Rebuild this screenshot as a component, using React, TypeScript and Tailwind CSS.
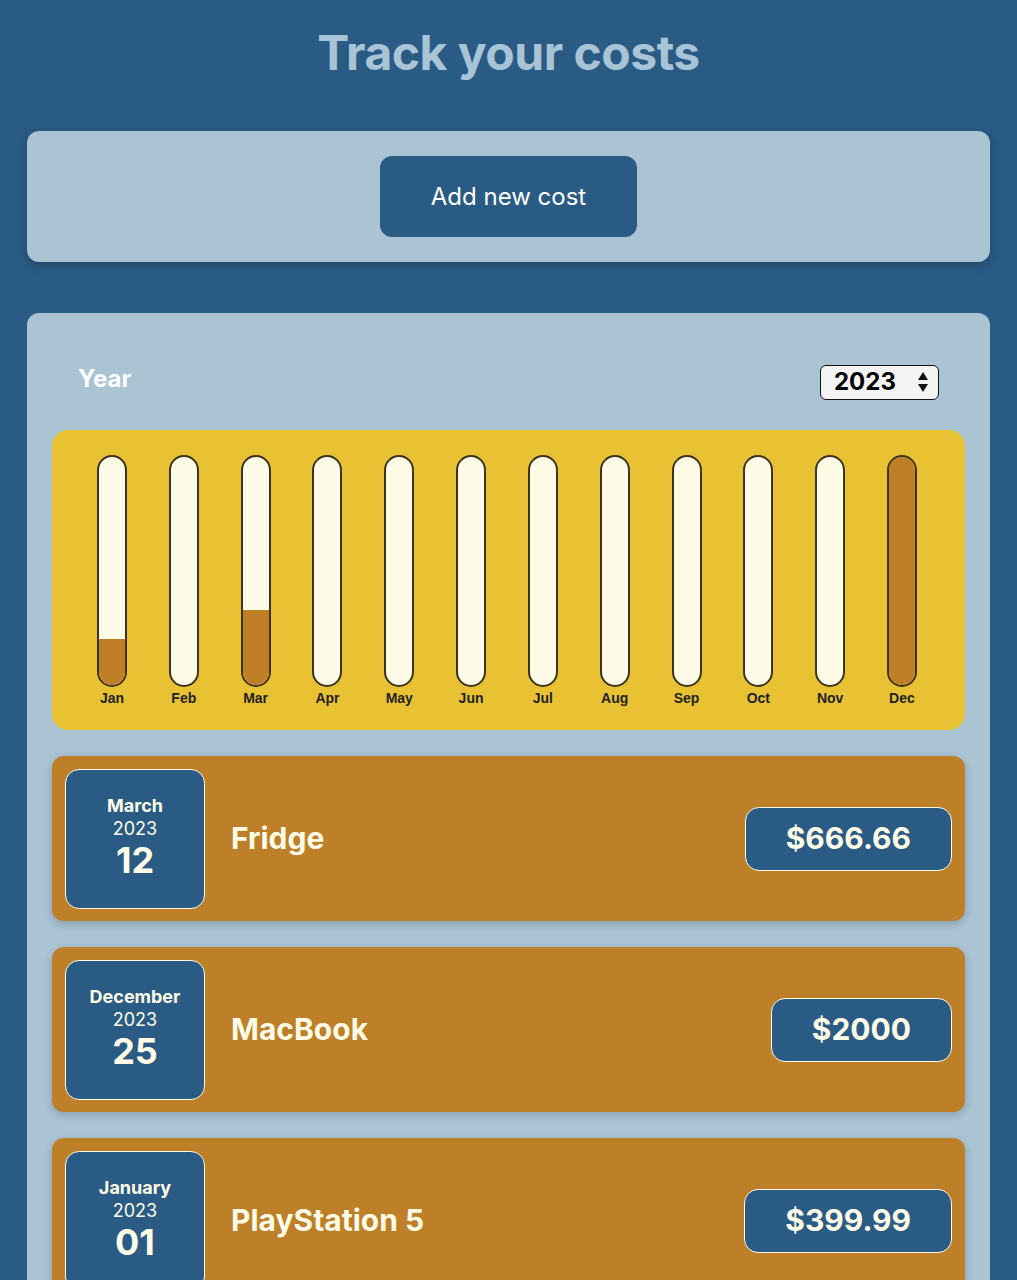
const months = [
  { name: "Jan", fill: 20 },
  { name: "Feb", fill: 0 },
  { name: "Mar", fill: 33 },
  { name: "Apr", fill: 0 },
  { name: "May", fill: 0 },
  { name: "Jun", fill: 0 },
  { name: "Jul", fill: 0 },
  { name: "Aug", fill: 0 },
  { name: "Sep", fill: 0 },
  { name: "Oct", fill: 0 },
  { name: "Nov", fill: 0 },
  { name: "Dec", fill: 100 },
];

const costs = [
  { month: "March", year: "2023", day: "12", title: "Fridge", amount: "$666.66" },
  { month: "December", year: "2023", day: "25", title: "MacBook", amount: "$2000" },
  { month: "January", year: "2023", day: "01", title: "PlayStation 5", amount: "$399.99" },
];

function ChartBar({ name, fill }: { name: string; fill: number }) {
  return (
    <div className="flex flex-col items-center">
      <div className="flex h-[232px] w-[30px] flex-col justify-end overflow-hidden rounded-full border-2 border-[#3b3320] bg-[#fefbe6]">
        <div className="w-full bg-[#c07f26]" style={{ height: `${fill}%` }} />
      </div>
      <span
        className="mt-[1px] text-[14px] font-bold text-[#222]"
        style={{ fontFamily: "'Liberation Sans', Arial, sans-serif" }}
      >
        {name}
      </span>
    </div>
  );
}

function CostItem({ cost }: { cost: (typeof costs)[number] }) {
  return (
    <div className="flex h-[165px] items-center rounded-xl bg-[#bd7f27] px-[13px] shadow-[0_3px_8px_rgba(0,0,0,0.2)]">
      <div className="flex h-[140px] w-[140px] flex-col items-center justify-center rounded-[14px] border-[1.5px] border-[#fefbe6] bg-[#2a5b84] pb-[4px] text-[#fefbe6]">
        <span className="text-[18px] font-bold leading-[23px]">{cost.month}</span>
        <span className="text-[18px] leading-[23px]">{cost.year}</span>
        <span className="text-[36px] font-bold leading-[40px]">{cost.day}</span>
      </div>
      <h2 className="ml-[26px] flex-1 text-[30px] font-bold text-[#fefbe6]">{cost.title}</h2>
      <div className="flex h-[64px] items-center rounded-[14px] border-[1.5px] border-[#fefbe6] bg-[#2a5b84] px-[40px] text-[30px] font-bold text-[#fefbe6]">
        {cost.amount}
      </div>
    </div>
  );
}

export default function App() {
  return (
    <div
      className="min-h-[1280px] bg-[#2a5b84] px-[27px] pb-8"
      style={{ fontFamily: "Inter, 'Noto Sans', sans-serif" }}
    >
      <h1 className="pt-[26px] text-center text-[48px] font-bold leading-[54px] tracking-[-0.5px] text-[#a9c4d6]">
        Track your costs
      </h1>

      <div className="mt-[51px] flex h-[131px] items-center justify-center rounded-xl bg-[#aac4d4] shadow-[0_3px_10px_rgba(0,0,0,0.25)]">
        <button className="h-[81px] w-[257px] rounded-xl bg-[#2a5b84] text-[24px] text-white">
          Add new cost
        </button>
      </div>

      <div className="mt-[51px] rounded-xl bg-[#aac4d4] px-[25px] pb-[30px] pt-[48px]">
        <div className="flex items-center justify-between px-[26px]">
          <label className="mb-[6px] text-[24px] font-bold text-white">Year</label>
          <div className="flex h-[35px] w-[119px] items-center justify-between rounded-md border-[1.5px] border-[#111] bg-[#f3f3f3] pl-[13px] pr-[9px]">
            <span className="text-[24px] font-bold text-black">2023</span>
            <svg width="12" height="22" viewBox="0 0 12 22">
              <path d="M6 1 L11 9 L1 9 Z" fill="#111" />
              <path d="M6 21 L11 13 L1 13 Z" fill="#111" />
            </svg>
          </div>
        </div>

        <div className="mt-[27px] flex h-[300px] items-start justify-between rounded-2xl bg-[#e9c234] pl-[45px] pr-[48px] pt-[25px]">
          {months.map((m) => (
            <ChartBar key={m.name} name={m.name} fill={m.fill} />
          ))}
        </div>

        <div className="mt-[26px] flex flex-col gap-[26px]">
          {costs.map((c) => (
            <CostItem key={c.title} cost={c} />
          ))}
        </div>
      </div>
    </div>
  );
}
